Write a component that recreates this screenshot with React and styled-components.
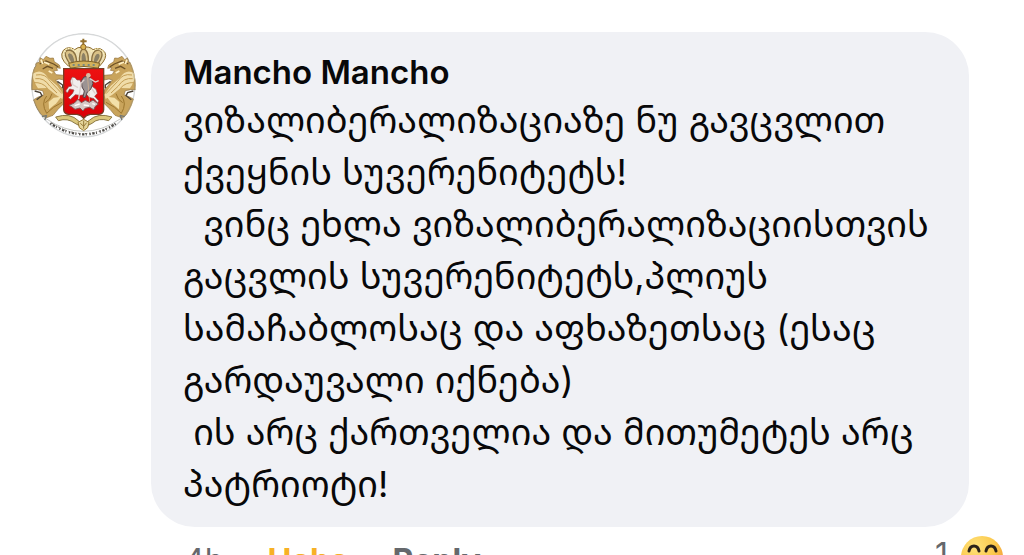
import React from 'react';
import styled, { createGlobalStyle } from 'styled-components';

const GlobalStyle = createGlobalStyle`
  * {
    box-sizing: border-box;
  }

  html,
  body {
    margin: 0;
    height: 100%;
    overflow: hidden;
    background-color: #fff;
  }

  body {
    font-family: Inter, "Noto Sans Georgian", "DejaVu Sans", sans-serif;
    color: #080809;
  }
`;

const Comment = styled.article`
  display: flex;
  align-items: flex-start;
  gap: 14px;
  padding: 32px 20px 0 30px;

  .avatar {
    flex: none;
    display: block;
    width: 107px;
    height: 107px;
  }
`;

const Content = styled.div`
  flex: 1;
  min-width: 0;
`;

const Bubble = styled.div`
  margin-right: 35px;
  padding: 18px 32px 17px;
  border-radius: 44px;
  background-color: #f0f1f5;
`;

const Author = styled.h3`
  margin: 0;
  font-size: 33px;
  font-weight: 600;
  line-height: 44px;
`;

const Message = styled.p`
  margin: 0;
  font-size: 36px;
  line-height: 52px;
  white-space: pre;
`;

const Footer = styled.footer`
  display: flex;
  align-items: flex-start;
  justify-content: space-between;
  padding-left: 33px;
  padding-top: 8px;
`;

const Actions = styled.div`
  display: flex;
  gap: 44px;
  padding-top: 4px;
  font-size: 32px;
  line-height: 44px;
  color: #65686c;
`;

const ActionButton = styled.button`
  padding: 0;
  border: none;
  background: none;
  font: inherit;
  font-weight: 700;
  color: ${(props) => (props.$active ? '#f7b125' : '#65686c')};
  cursor: pointer;
`;

const Reactions = styled.div`
  display: flex;
  gap: 12px;
  font-size: 32px;
  line-height: 40px;
  color: #65686c;

  svg {
    display: block;
    width: 44px;
    height: 44px;
  }
`;

const Beast = () => (
  <g>
    <path d="M36 158 L42 142 48 136 45 128 58 125 60 111 70 117 78 107 90 113 100 112 103 123 118 133 121 143 108 141 113 149 101 151 108 162 132 164 132 178 117 175 107 178 119 194 130 207 133 223 133 247 114 266 99 284 77 292 62 280 50 262 40 238 53 230 72 222 68 210 52 207 35 207 Z" fill="#c9a45c" stroke="#94723c" strokeWidth="2" />
    <path d="M37 160 Q64 140 84 171 L112 196 131 222 127 235 107 222 82 202 54 203 Q40 182 37 160Z" fill="#f0dca8" />
    <path d="M46 174 Q72 170 89 196 L111 217 M42 186 Q67 184 83 203 M48 163 Q76 157 91 182 L126 219" fill="none" stroke="#c39c53" strokeWidth="3" />
    <path d="M59 130 L78 121 101 130 115 139 M68 145 L82 137 99 143" fill="none" stroke="#6d5126" strokeWidth="4" />
    <path d="M72 124 L88 131 M86 151 L97 157 M63 117 L68 130" stroke="#fff0c6" strokeWidth="5" />
    <path d="M80 226 Q62 248 80 278 Q98 258 126 245 M96 219 Q91 238 76 246" fill="none" stroke="#9b752e" strokeWidth="3" />
    <path d="M86 244 L101 231 124 228 109 248 87 266Z" fill="#f3e0a9" />
    <path d="M44 211 L61 216 66 225 50 237 M112 182 L128 193 128 203" fill="none" stroke="#4b4237" strokeWidth="4" />
  </g>
);

const CoatOfArms = () => (
  <svg className="avatar" viewBox="30 34 321 321" role="img" aria-label="Mancho Mancho">
    <defs>
      <clipPath id="avatarClip">
        <circle cx="190" cy="194" r="157" />
      </clipPath>
      <linearGradient id="shieldRed" x2="0" y2="1">
        <stop stopColor="#ed1111" />
        <stop offset="1" stopColor="#d90007" />
      </linearGradient>
    </defs>
    <g clipPath="url(#avatarClip)">
      <path d="M30 34h321v321H30z" fill="#fff" />
      <Beast />
      <g transform="translate(384 0) scale(-1 1)">
        <Beast />
      </g>

      {/* crown */}
      <path d="M145 136 Q115 111 130 89 Q145 74 164 87 Q172 78 190 80 Q209 76 219 87 Q241 76 255 96 Q263 111 239 136Z" fill="#eee1b7" stroke="#8e6d2d" strokeWidth="3" />
      <path d="M151 132 Q121 89 149 88 Q171 92 170 132 M179 132 Q175 91 190 84 Q209 91 204 132 M215 132 Q213 88 236 88 Q258 97 232 132" fill="#d9c187" stroke="#8a7142" strokeWidth="4" />
      <path d="M156 128 Q137 101 148 98 Q163 102 163 128 M186 127 Q182 99 191 96 Q199 102 198 127 M221 127 Q223 99 235 99 Q246 105 227 127" fill="#8b8065" />
      <path d="M146 128 Q191 114 239 128 L235 142 Q191 133 151 142Z" fill="#d3b25b" stroke="#7d6228" strokeWidth="3" />
      <path d="M158 133 L224 133" stroke="#597e94" strokeWidth="5" strokeDasharray="6 9" />
      <path d="M190 54 V80 M181 62 H200" stroke="#94712e" strokeWidth="6" />
      <circle cx="190" cy="79" r="8" fill="#dab350" stroke="#8c672c" strokeWidth="3" />
      <path d="M131 102 L139 85 153 82 165 92 177 84 M205 86 L216 93 231 83 249 92 252 104" fill="none" stroke="#fff4bb" strokeWidth="4" strokeDasharray="4 4" />

      {/* shield with the rider */}
      <path d="M131 144 H251 V267 Q250 280 237 281 H211 Q198 283 191 293 Q184 283 171 281 H145 Q132 279 131 267Z" fill="url(#shieldRed)" stroke="#773e25" strokeWidth="4" />
      <path d="M137 211 L146 198 155 196 151 181 157 169 165 171 171 178 180 178 185 190 197 197 215 196 228 206 232 218 224 227 236 240 233 247 222 234 207 230 200 221 181 224 166 222 151 236 145 231 158 218 162 208 149 205 142 217Z" fill="#f1eeee" stroke="#8d5050" strokeWidth="2" />
      <path d="M184 180 L192 169 204 167 215 175 219 188 212 206 202 214 196 231 189 229 193 211 186 199Z" fill="#9b9393" stroke="#574548" strokeWidth="3" />
      <circle cx="205" cy="164" r="7" fill="#d5bca5" />
      <path d="M210 174 L226 184 236 180 M193 177 L183 188 176 235 M157 173 L158 192 174 201 M216 205 L226 219" fill="none" stroke="#ddd0cd" strokeWidth="4" />
      <path d="M202 161 L209 244" stroke="#ddb790" strokeWidth="2" />
      <path d="M147 254 L163 247 174 236 184 246 196 239 208 245 219 238 235 250 226 257 221 267 209 260 195 263 189 271 180 262 165 266 156 259Z" fill="#d6c9c6" stroke="#7e5555" strokeWidth="3" />
      <path d="M164 255 L179 250 M191 253 L207 255 M217 249 L225 251" stroke="#fff" strokeWidth="4" />

      {/* ribbon */}
      <path d="M66 288 L80 284 M80 284 L74 299 M314 288 L300 284 M300 284 L306 299" fill="none" stroke="#737875" strokeWidth="4" />
      <path d="M107 289 Q151 275 176 301 Q190 316 208 299 Q233 275 276 289 L266 300 Q236 290 216 308 Q190 326 165 308 Q143 291 115 300Z" fill="#dac77d" stroke="#8b7743" strokeWidth="3" />
      <path d="M191 296 L207 305 203 321 191 330 178 321 174 305Z" fill="#e5d59c" stroke="#977a35" strokeWidth="3" />
      <path d="M181 308 L191 317 200 306 M191 300 V324" fill="none" stroke="#967a39" strokeWidth="3" />
      <path d="M78 294 Q190 370 302 294" fill="none" stroke="#a9aaa4" strokeWidth="2" />
      <path d="M91 308 Q191 374 289 308" fill="none" stroke="#4a4845" strokeWidth="7" strokeDasharray="4 5 7 4 3 8" />
      <path d="M96 308 Q191 369 285 309" fill="none" stroke="#6b6762" strokeWidth="3" strokeDasharray="7 6 3 5" />
      <circle cx="190" cy="194" r="155" fill="none" stroke="#777d80" strokeOpacity=".3" strokeWidth="5" />
    </g>
  </svg>
);

const HahaIcon = () => (
  <svg viewBox="0 0 44 44" aria-label="Haha">
    <defs>
      <radialGradient id="hahaFace" cx=".35" cy=".25" r=".85">
        <stop stopColor="#ffe27a" />
        <stop offset=".55" stopColor="#fbc84b" />
        <stop offset="1" stopColor="#ef8d35" />
      </radialGradient>
    </defs>
    <circle cx="22" cy="22" r="21" fill="url(#hahaFace)" />
    <path d="M9 16q1-5 5-5t5 5M26 16q1-5 5-5t5 5" fill="none" stroke="#2c2218" strokeWidth="3" strokeLinecap="round" />
    <path d="M9 24h26q-1 14-13 14T9 24z" fill="#4b2518" />
  </svg>
);

const message = [
  'ვიზალიბერალიზაციაზე ნუ გავცვლით',
  'ქვეყნის სუვერენიტეტს!',
  '  ვინც ეხლა ვიზალიბერალიზაციისთვის',
  'გაცვლის სუვერენიტეტს,პლიუს',
  'სამაჩაბლოსაც და აფხაზეთსაც (ესაც',
  'გარდაუვალი იქნება)',
  ' ის არც ქართველია და მითუმეტეს არც',
  'პატრიოტი!',
].join('\n');

const App = () => {
  return (
    <>
      <GlobalStyle />
      <Comment>
        <CoatOfArms />
        <Content>
          <Bubble>
            <Author>Mancho Mancho</Author>
            <Message lang="ka">{message}</Message>
          </Bubble>
          <Footer>
            <Actions>
              <span>4h</span>
              <ActionButton type="button" $active>Haha</ActionButton>
              <ActionButton type="button">Reply</ActionButton>
            </Actions>
            <Reactions>
              <span>1</span>
              <HahaIcon />
            </Reactions>
          </Footer>
        </Content>
      </Comment>
    </>
  );
};

export default App;
